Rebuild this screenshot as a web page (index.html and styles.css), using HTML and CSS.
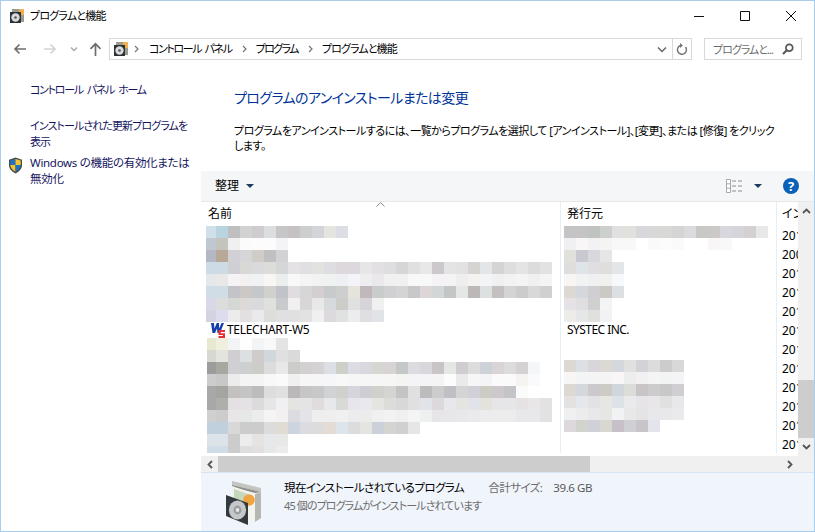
FILE: index.html
```html
<!DOCTYPE html>
<html lang="ja">
<head>
<meta charset="utf-8">
<title>プログラムと機能</title>
<link rel="stylesheet" href="styles.css">
</head>
<body>
<svg class="defs" width="0" height="0" aria-hidden="true">
  <symbol id="cpl" viewBox="0 0 16 16">
    <path d="M3 1h11l1 1v12H3z" fill="#9a9a8e"/>
    <path d="M10 1h4l1 1v5h-5z" fill="#f0b050"/>
    <path d="M1 4h11v11H1z" fill="#2c3134"/>
    <circle cx="6.5" cy="9.5" r="4.2" fill="#d8dadb"/>
    <circle cx="6.5" cy="9.5" r="1.3" fill="#555"/>
  </symbol>
</svg>
<div class="window">
  <header class="titlebar">
    <svg class="title-icon"><use href="#cpl"/></svg>
    <span class="title-text">プログラムと機能</span>
    <div class="winctl">
      <svg width="12" height="12" viewBox="0 0 12 12"><path d="M1 6.5h10" stroke="#111" fill="none"/></svg>
      <svg width="12" height="12" viewBox="0 0 12 12"><path d="M1.5 1.5h9v9h-9z" stroke="#111" fill="none"/></svg>
      <svg width="12" height="12" viewBox="0 0 12 12"><path d="M1 1l10 10M11 1L1 11" stroke="#111" fill="none"/></svg>
    </div>
  </header>

  <nav class="navbar">
    <div class="navbtns">
      <svg class="nav-back" width="14" height="12" viewBox="0 0 14 12"><path d="M13 6H2M6.500 1.500L2 6l4.500 4.500" stroke="#6e6e6e" stroke-width="1.600" fill="none"/></svg>
      <svg class="nav-fwd" width="14" height="12" viewBox="0 0 14 12"><path d="M1 6h11M7.500 1.500L12 6l-4.500 4.500" stroke="#d2d2d2" stroke-width="1.600" fill="none"/></svg>
      <svg class="nav-down" width="8" height="6" viewBox="0 0 8 6"><path d="M1 1.500l3 3 3-3" stroke="#a8a8a8" stroke-width="1.300" fill="none"/></svg>
      <svg class="nav-up" width="13" height="14" viewBox="0 0 13 14"><path d="M6.500 14V2M1.500 6.800l5-5 5 5" stroke="#6e6e6e" stroke-width="1.700" fill="none"/></svg>
    </div>
    <div class="address">
      <svg class="addr-icon"><use href="#cpl"/></svg>
      <svg class="crumb-sep first" width="5" height="8" viewBox="0 0 5 8"><path d="M1 1l3 3-3 3" stroke="#777" stroke-width="1.200" fill="none"/></svg>
      <span class="crumb crumb-cp">コントロール パネル</span>
      <svg class="crumb-sep" width="5" height="8" viewBox="0 0 5 8"><path d="M1 1l3 3-3 3" stroke="#777" stroke-width="1.200" fill="none"/></svg>
      <span class="crumb crumb-prog">プログラム</span>
      <svg class="crumb-sep" width="5" height="8" viewBox="0 0 5 8"><path d="M1 1l3 3-3 3" stroke="#777" stroke-width="1.200" fill="none"/></svg>
      <span class="crumb crumb-feat">プログラムと機能</span>
      <svg class="addr-drop" width="10" height="7" viewBox="0 0 10 7"><path d="M1 1.500l4 4 4-4" stroke="#666" stroke-width="1.500" fill="none"/></svg>
      <div class="addr-refresh">
        <svg width="12" height="13" viewBox="0 0 12 13"><path d="M4.500 2.500A4.500 4.500 0 1 0 9.500 4" stroke="#777" stroke-width="1.500" fill="none"/><path d="M4 0l3 2.500L4 5z" fill="#777"/></svg>
      </div>
    </div>
    <div class="search">
      <span class="search-text">プログラムと...</span>
      <svg width="12" height="12" viewBox="0 0 12 12"><circle cx="7.300" cy="4.700" r="3.400" stroke="#555" stroke-width="1.700" fill="none"/><path d="M4.800 7.200L1 11" stroke="#555" stroke-width="2" fill="none"/></svg>
    </div>
  </nav>

  <div class="main">
    <aside class="sidebar">
      <a class="side-link home"><span class="side-slot"></span><span>コントロール パネル ホーム</span></a>
      <a class="side-link updates"><span class="side-slot"></span><span>インストールされた更新プログラムを<br>表示</span></a>
      <a class="side-link features"><span class="side-slot">
        <svg width="15" height="17" viewBox="0 0 15 17"><path d="M7.500 0.500L14 2.800v5.200c0 4-3 6.800-6.500 8.500C4 14.800 1 12 1 8V2.800z" fill="#4a4a4a"/><path d="M7.500 2L7.500 8H2.300V3.600z" fill="#1f74c6"/><path d="M7.500 2l5.200 1.600V8H7.500z" fill="#f4c430"/><path d="M2.300 8h5.200v6.800C4.600 13.300 2.400 11 2.300 8z" fill="#f4c430"/><path d="M7.500 8h5.200c-.1 3-2.300 5.300-5.200 6.800z" fill="#1f74c6"/></svg>
      </span><span>Windows の機能の有効化または<br>無効化</span></a>
    </aside>

    <section class="content">
      <div class="intro">
        <h1 class="heading">プログラムのアンインストールまたは変更</h1>
        <p class="desc">プログラムをアンインストールするには、一覧からプログラムを選択して [アンインストール]、[変更]、または [修復] をクリック<br>します。</p>
      </div>

      <div class="toolbar">
        <span class="tool-label">整理</span>
        <span class="caret"></span>
        <div class="tool-right">
          <svg class="view-icon" width="17" height="14" viewBox="0 0 17 14"><path d="M.5.500h4v13h-4zM.5 4.800h4M.5 9.200h4" stroke="#a8a8a8" fill="#fff"/><path d="M6 2h4M12 2h4M6 7h4M12 7h4M6 12h4M12 12h4" stroke="#8e8e8e"/></svg>
          <span class="caret"></span>
          <span class="help">?</span>
        </div>
      </div>

      <div class="list">
        <div class="cols">
          <div class="col col-name">
            <div class="col-head">名前<svg class="sort" width="9" height="5" viewBox="0 0 9 5"><path d="M.5 4.500l4-4 4 4" stroke="#8a8a8a" fill="none"/></svg></div>
            <div class="mosaic" data-set="nameA"></div>
            <div class="item">
              <svg class="w5" width="16" height="16" viewBox="0 0 16 16"><path d="M1 1h3l.4 5.500L6.800 1H9l.2 5.500L11.500 1H14l-4 10H7.500L7 6.500 5 11H2.500z" fill="#1540a8"/><path d="M8.500 8H15v2h-4.300v1.200H15V16H8.500v-2h4.300v-1H8.500z" fill="#e8303a"/></svg>
              <span>TELECHART-W5</span>
            </div>
            <div class="mosaic mosaic-tail" data-set="nameB"></div>
          </div>
          <div class="col col-pub">
            <div class="col-head">発行元</div>
            <div class="mosaic" data-set="pubA"></div>
            <div class="item"><span>SYSTEC INC.</span></div>
            <div class="mosaic mosaic-gap" data-set="pubB"></div>
          </div>
          <div class="col col-date">
            <div class="col-head">インストール日</div>
            <div class="date">2017</div>
            <div class="date">2009</div>
            <div class="date">2017</div>
            <div class="date">2017</div>
            <div class="date">2017</div>
            <div class="date">2017</div>
            <div class="date">2017</div>
            <div class="date">2017</div>
            <div class="date">2017</div>
            <div class="date">2017</div>
            <div class="date">2017</div>
            <div class="date">2017</div>
          </div>
        </div>
        <div class="vscroll">
          <svg class="sb-arrow" width="9" height="6" viewBox="0 0 9 6"><path d="M1 5l3.500-3.500L8 5" stroke="#555" stroke-width="1.800" fill="none"/></svg>
          <div class="vtrack"><div class="vthumb"></div></div>
          <svg class="sb-arrow" width="9" height="6" viewBox="0 0 9 6"><path d="M1 1l3.500 3.500L8 1" stroke="#555" stroke-width="1.800" fill="none"/></svg>
        </div>
      </div>

      <div class="hscroll">
        <div class="hbtn"><svg width="6" height="9" viewBox="0 0 6 9"><path d="M5 1L1.500 4.500 5 8" stroke="#555" stroke-width="1.800" fill="none"/></svg></div>
        <div class="hthumb"></div>
        <div class="htrack"></div>
        <div class="hbtn"><svg width="6" height="9" viewBox="0 0 6 9"><path d="M1 1l3.500 3.500L1 8" stroke="#555" stroke-width="1.800" fill="none"/></svg></div>
        <div class="hcorner"></div>
      </div>

      <footer class="status">
        <svg class="status-icon" width="40" height="48" viewBox="0 0 40 48">
          <path d="M7 3l29 7v4L7 7z" fill="#c4c4c0"/>
          <path d="M7 7l29 7-6 1L7 9z" fill="#8f8f8a"/>
          <path d="M7 8l23 8v28l-23-7z" fill="#f2f2ee"/>
          <path d="M30 16l6-2v26l-6 4z" fill="#b6b6b2"/>
          <path d="M9 11l14 5v16L9 26z" fill="#c5d8bd"/>
          <circle cx="24" cy="22" r="5.800" fill="#efa53f"/>
          <path d="M1 17l22 8v22L1 38z" fill="#333a3e"/>
          <ellipse cx="12.500" cy="32" rx="8.600" ry="9.400" fill="#c4c8ca"/>
          <ellipse cx="12.500" cy="32" rx="4" ry="4.400" fill="#9a9ea0"/>
          <ellipse cx="12.500" cy="32" rx="1.800" ry="2" fill="#e8e8e8"/>
        </svg>
        <div class="status-text">
          <div class="status-line">
            <span class="status-title">現在インストールされているプログラム</span>
            <span class="status-key">合計サイズ:</span>
            <span class="status-val">39.6 GB</span>
          </div>
          <div class="status-sub">45 個のプログラムがインストールされています</div>
        </div>
      </footer>
    </section>
  </div>
</div>
<script src="script.js"></script>
</body>
</html>
```
FILE: styles.css
```css
* { box-sizing: border-box; }
html, body { margin: 0; padding: 0; height: 100%; overflow: hidden; background: #fff; }
body {
  font-family: "Noto Sans", "Noto Sans CJK JP", sans-serif;
  font-size: 12px;
  font-feature-settings: "palt";
  color: #000;
}
.defs { position: absolute; }
.window {
  width: 815px;
  height: 532px;
  border: 1px solid #a9cdec;
  display: flex;
  flex-direction: column;
  background: #fff;
}
.titlebar { height: 30px; display: flex; align-items: center; padding-left: 8px; }
.title-icon { width: 16px; height: 16px; }
.title-text { margin-left: 5px; line-height: 16px; font-size: 11px; letter-spacing: -0.8px; }
.winctl { margin-left: auto; display: flex; gap: 34px; padding-right: 17px; }

.navbar { height: 38px; display: flex; padding-top: 7px; align-items: flex-start; }
.navbtns { width: 108px; height: 22px; display: flex; align-items: center; padding-left: 12px; }
.nav-fwd { margin-left: 16px; }
.nav-down { margin-left: 13px; }
.nav-up { margin-left: 11px; }
.address {
  width: 583px;
  height: 22px;
  border: 1px solid #d9d9d9;
  display: flex;
  align-items: center;
  padding-left: 3px;
}
.addr-icon { width: 16px; height: 16px; }
.crumb-sep { margin: 0 9px 0 10px; }
.crumb-sep.first { margin: 0 10px 0 5px; }
.crumb { white-space: nowrap; line-height: 16px; font-size: 11px; }
.crumb-cp { letter-spacing: -1.4px; word-spacing: 2px; }
.crumb-prog { letter-spacing: -1.6px; }
.crumb-feat { letter-spacing: -0.9px; }
.addr-drop { margin-left: auto; margin-right: 5px; }
.addr-refresh {
  width: 19px;
  height: 20px;
  border-left: 1px solid #d9d9d9;
  display: flex;
  align-items: center;
  justify-content: center;
}
.search {
  width: 98px;
  height: 22px;
  margin-left: 12px;
  border: 1px solid #d9d9d9;
  display: flex;
  align-items: center;
  justify-content: space-between;
  padding: 0 7px 0 8px;
  color: #6d6d6d;
}
.search-text { white-space: nowrap; font-size: 11px; letter-spacing: -1px; }

.main { flex: 1; display: flex; min-height: 0; }
.sidebar { width: 200px; padding-top: 13px; padding-left: 7px; }
.side-link { display: flex; line-height: 16px; color: #14145e; white-space: nowrap; font-size: 11px; }
.side-slot { width: 22px; flex: none; }
.home { letter-spacing: -1.3px; word-spacing: 2.500px; }
.updates { margin-top: 20px; letter-spacing: -0.9px; }
.features { margin-top: 5px; font-size: 11.5px; letter-spacing: -0.3px; }
.features svg { display: block; margin-top: 2px; }

.content { flex: 1; display: flex; flex-direction: column; min-width: 0; }
.intro { height: 102px; padding: 19px 0 0 33px; }
.heading { margin: 0; font-size: 14px; letter-spacing: -0.6px; font-weight: 400; line-height: 20px; color: #003399; }
.desc { margin: 15px 0 0; line-height: 15px; white-space: nowrap; font-size: 11px; letter-spacing: -0.5px; }

.toolbar {
  height: 31px;
  background: #f5f6f7;
  border-bottom: 1px solid #e6e7e8;
  display: flex;
  align-items: center;
  padding-left: 14px;
}
.tool-label { line-height: 16px; }
.caret {
  width: 0;
  height: 0;
  margin-left: 7px;
  border-left: 4px solid transparent;
  border-right: 4px solid transparent;
  border-top: 4px solid #1d3a5f;
}
.tool-right { margin-left: auto; display: flex; align-items: center; padding-right: 15px; }
.view-icon { margin-right: 4px; }
.help {
  width: 16px;
  height: 16px;
  margin-left: 21px;
  border-radius: 50%;
  background: #0a62b8;
  color: #fff;
  font-weight: 700;
  font-size: 13px;
  line-height: 16px;
  text-align: center;
}

.list { height: 254px; display: flex; }
.cols { flex: 1; display: flex; min-width: 0; overflow: hidden; }
.col { flex: none; height: 251px; overflow: hidden; border-right: 1px solid #e6eef7; }
.col-name { width: 360px; padding-left: 5px; }
.col-pub { width: 216px; padding-left: 3px; }
.col-date { width: 21px; border-right: 0; }
.col-head { height: 24px; line-height: 24px; padding-left: 2px; white-space: nowrap; position: relative; }
.col-pub .col-head { padding-left: 3px; }
.col-date .col-head, .date { padding-left: 5px; white-space: nowrap; overflow: hidden; }
.sort { position: absolute; left: 170px; top: 0; }
.mosaic-row { display: flex; height: 12px; }
.mosaic-row span { width: 12px; flex: none; }
.col-name .mosaic-row span:first-child { width: 10px; }
.mosaic-tail { padding-left: 1px; }
.col-name .mosaic-tail .mosaic-row span:first-child { width: 9px; }
.mosaic-gap { margin-top: 22px; }
.item { height: 16px; display: flex; align-items: center; gap: 5px; line-height: 16px; white-space: nowrap; letter-spacing: -0.3px; }
.col-name .item { padding-left: 4px; gap: 1px; }
.col-pub .item { padding-left: 3px; letter-spacing: -0.55px; }
.date { height: 19px; line-height: 19px; }

.vscroll { width: 16px; background: #f0f0f0; display: flex; flex-direction: column; align-items: center; }
.sb-arrow { flex: none; margin: 6px 0; }
.vtrack { flex: 1; width: 100%; padding-top: 160px; }
.vthumb { height: 58px; background: #cdcdcd; }

.hscroll { height: 16px; display: flex; background: #f0f0f0; }
.hbtn { width: 17px; display: flex; align-items: center; justify-content: center; }
.hthumb { width: 372px; background: #cdcdcd; }
.htrack { flex: 1; }
.hcorner { width: 16px; }

.status {
  flex: 1;
  background: #f0f4fb;
  border-top: 1px solid #d6e4f5;
  display: flex;
  padding: 5px 0 0 24px;
}
.status-text { margin-left: 19px; padding-top: 1px; }
.status-line { display: flex; line-height: 18px; white-space: nowrap; font-size: 11.5px; letter-spacing: -0.55px; }
.status-key { margin-left: 24px; color: #6d6d6d; }
.status-val { margin-left: 11px; color: #5a5a5a; letter-spacing: -0.4px; }
.status-sub { line-height: 18px; color: #6d6d6d; white-space: nowrap; font-size: 11px; letter-spacing: -0.9px; }
```
FILE: script.js
```js
var data = {
  nameA: [
    "d0e0e8 b8d4e0 c0bfbf d2d2d2 cfcbcf dcdde0 c6c6c6 c5c1c4 cdcfcd d3d3da e6e4e0 dcdee3",
    "bfc8d0 c4c4bc f0f0f0 fbfbfb fcfcfc fcfcfc f4f4f6",
    "b4b8c4 b8a898 d0d0d6 d6d6d8 d0ccc8 c0c0c0 d2d2d4",
    "cddbe6 cfdbe4 cfcfd4 d8d8d4 d8dadc dcdcd8 d4d6d8 e4e2e4 e0e0e2 e2e2de dedee2 dcd8dc dcd8de e6e6e6 e2e0e2 dedee0 d6d6d6 e0e0e0 e8e8e8 ccc8cc e4e4e4 e2e2e2 d6d4d0 e2e6e8 d4d4d4 dedede e4e4e4 dcdcdc e2e2e2",
    "e4e8ea e8e8e8 f4f4f6 f2f0f0 f0f2f4 f8f6f2 eceeee f8f8f8 f4f4f4 f2f2f2 f0f2f2 eeeff2 f4f4f8 eeeef0 eae8ea f0f0f0 f0f0f0 f8f8f8 f8f8f8 f4f2f6 f4f4f6 eeeeee f4f2ee f2f4f6 f0f0f2 f2f2f2 f4f4f4 f0f0f0 f4f4f4",
    "d0dde6 d0dde4 c4c4c8 ccc8c6 c4c8cc d0d0cc c0c4c8 e0dce0 d6d6d6 d4ced0 c8cacc cdcfcf e4e4da c0b8bc c8ccca d0d0d2 d4d4d4 c6c8ca dcd6d6 d2d6d6 c4c6c6 e4e8e4 bcb8b8 dce0e0 c4c0c0 d4d4d4 cccccc d8d8d8 d0d0d0",
    "d8d8e8 dcdcdc d4d8d4 dcdad8 d8dadc e0e0dc c8cacc f0f0f0 d8d6d6 e8e8e8 d6dadc ccccc8 e0e0e0 d6d4d8 f0f0f0",
    "d4d4e0 dcdcee ececec e2e0e0 eaeaec dcdedc e0e0e2 e0e0e0 e2e2e0 f0f0f0 dcdadc e0e2e2 ececee e0dee2 e0e4e6"
  ],
  nameB: [
    "e8e8d0 f0eedc f2f4f6 fefefe f2f4f6 f8f8f8 e4e4e4",
    "d8d8d0 e4e4de d0ced0 dce0e2 d0cccc d0d8dc e0e0e2 dadada",
    "9c9c9c a8a8a0 d0d0d4 ccd0d0 ccccc8 dcdcdc e8e8e8 ccccc8 d2d0d0 d4d2d2 dce0e4 ccd0c8 dcdce4 d8d8de d6d6d2 d8d4d4 c4c8c8 dcdce0 d8d8dc c8c4c8 e4e8e4 d0ccd0 dcdcdc ccd2d8 d8d4d8 dcdcdc d4d2d2 f4f6f8",
    "cccccc c8c8c8 ececec f4f4f4 f4f4f6 f8f8f8 fafafa f0f0f0 f6f6f6 f6f6f6 f6f6f8 f8f8f8 f6f6f6 f6f6f6 f6f6f6 f6f6f4 f4f4f0 f2f4f6 f4f4f6 f4f4f4 fcfcfc eaeaea f6f6f6 f4f4f6 fafafa fafafa f6f4f0 fafafc",
    "a8a8a8 a4a4a0 c4c0c0 c4c4c4 bcbcbc dcdedc e0e0e0 bcb8ba c6c6c6 c8c8c8 d0d2d4 d0d0cc d6d4dc ccced4 d0d0cc d4d4d0 c4c4c4 e0e0e0 bcbcbc cccccc c0c0c4 d4d4d4 d0d0d6 ccccc4 ccc8cc c4c4c8 fafcfc",
    "a8a8a8 aeaeaa e4e0e4 e4e2e4 dcdadc e6e6e6 f0f0f2 e4e4e0 e4e4e4 e0dcdc e6e8ec d8dad8 e8e6ec e8e8ee e4e4e0 dcdcd8 d8d8d8 e0e0e2 e0e4e8 dcd8dc e8e8ec e4e4e0 e0e4ea e4e2dc e6e6ea e4e6e8 e6e2e4 e8e6e6 e2e2e2",
    "d0d0d0 cccccc e8e6e6 e6e8e8 ececec f4f4f4 f2f0f0 dcdce0 e4e4e8 eeeeee eeeeee f0f0f0 ecebee ececec f0f0f0 f2f2f2 f0f0f0 f4f4f6 eef0f0 e6e6e8 e8e6e8 e8e8ea eaeaec ececec ececec ececec e8e8ea e8e8ea e2e2e2",
    "c0d0dc c0d0dc d8d8d8 cccccc cccccc dcdcdc e0dcd4 ccd4e0 dcdce0 dcdcdc e4dcd4 dce4ec dcdcdc e4e4e0 ccd0d8 d4d4d0 d0d0d0 e4e6e8",
    "dce4ea dce4ea cccccc ececec e6e4e2 e6e8ea e8e8e8",
    "d0dce8 d0dce8 cccccc dedede e4e0e0 e6e8e8 ececec"
  ],
  pubA: [
    "c4c4c4 c4c4c4 c0c4c0 ccd0cc e0e0e0 e0e0dc d8d8dc d8d8d8 d8d8d4 d4d4d4 dcdadc c8c8c4 ccc8c8 d8d8dc d4d4da d4d0d0 e8e8ea",
    "f0f0f2 f8f6f6 f2f2f4 f4f4f2 f8f8f8 f8f8f8 ffffff fafafa fcfcfc fafafa ffffff ffffff f8f6f6 f8f8f8",
    "e0e0dc c8c8d0 d8d8dc e6e6e8",
    "e0dedc dfe4e8 e0dee0 e0dedc e2e6e8",
    "f8f6f4 f0f2f4 f0f0f0 f0f0ee f6f8fa",
    "dcd8d4 d4d8dc d0ced0 ccc8c4 dce0e2",
    "e4e2e4 e0dee0 d0d0d0 f2f4f6",
    "eeece8 e4e6e8 e0e0de f0f2f4"
  ],
  pubB: [
    "dcd8d4 dce0e4 d8d6d8 dcd8d4 d4d8dc e0e0e0 d4d2d6 dcdcdc cccccc d8d8d8",
    "f8f6f4 f2f4f6 f4f4f4 f4f4f4 f8f6f6 eceeee f2f0f2 f4f4f4 f2f4f4 f4f4f6",
    "dcd8d4 d4d8dc ccc8cc ccccc4 d0d6dc dcdcd8 c8c4c8 cccccc c8c8c8 d0ced2",
    "e4e2e0 e4e8ec e2e2e4 e6e6e2 dce2e6 eaeaec e6e4e8 e8e6e8 e0e0e0 e8e8ea",
    "f0f0f0 ececec e8e8ea e6e6e4 f0f2f4 e8e8e8 e4e4e6 e8e8ea e8e8ea eaeaec",
    "dcd8dc d0d4cc d0d0d8 d8d8d0 c8c0c8 d0d0d4 c8c4c8 e4e4ec"
  ]
};
document.querySelectorAll(".mosaic").forEach(function (box) {
  data[box.dataset.set].forEach(function (line) {
    var row = document.createElement("div");
    row.className = "mosaic-row";
    line.split(" ").forEach(function (hex) {
      var cell = document.createElement("span");
      cell.style.background = "#" + hex;
      row.appendChild(cell);
    });
    box.appendChild(row);
  });
});
```
